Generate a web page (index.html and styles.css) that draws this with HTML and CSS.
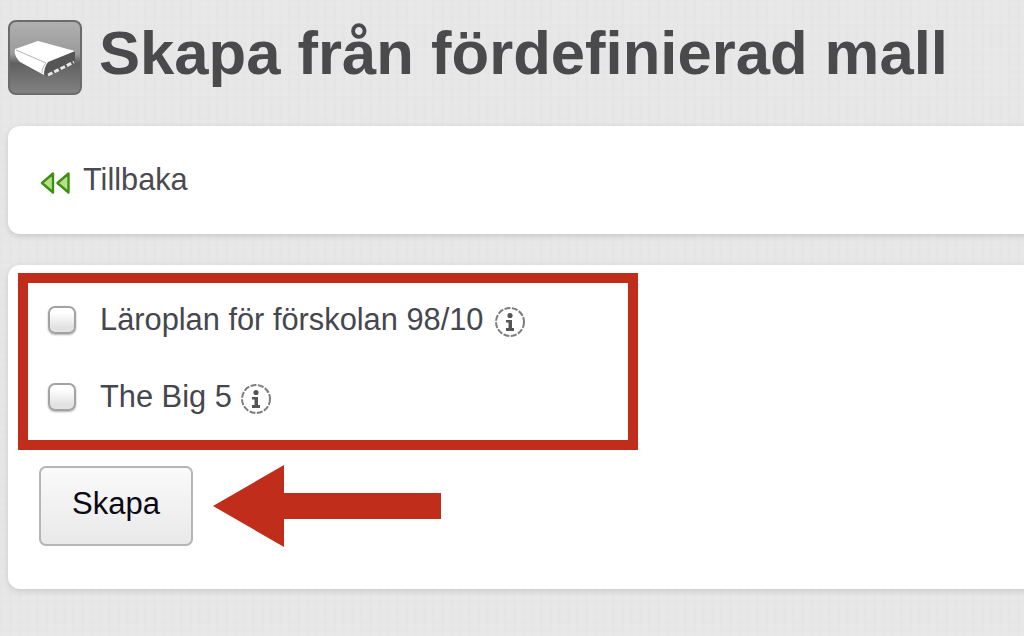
FILE: index.html
```html
<!DOCTYPE html>
<html lang="sv">
<head>
<meta charset="utf-8">
<title>Skapa från fördefinierad mall</title>
<link rel="stylesheet" href="styles.css">
</head>
<body>
<div class="page">
  <header class="head">
    <div class="book">
      <svg viewBox="0 0 74 75" width="74" height="75">
        <path d="M40 42 L67 31 L67 43 L39 56 L36 54 C36 50 37 46 40 42 Z" fill="#555"/>
        <path d="M7 29 L30 21 L67 31 L40 42 C37 46 36 50 36 55 L12 42 C8 38 6 33 7 29 Z" fill="#fff"/>
        <path d="M8 30 L38 43 C35 46 34 50 34 53" stroke="#b5b5b5" stroke-width="1" fill="none"/>
        <path d="M40 55 L66 42" stroke="#e8e8e8" stroke-width="3" stroke-dasharray="5 2" fill="none"/>
      </svg>
    </div>
    <h1 class="title">Skapa från fördefinierad mall</h1>
  </header>
  <section class="card back">
    <svg class="rew" viewBox="0 0 30 22" width="30" height="22">
      <path d="M2 11 L13 1.5 L13 20.5 Z M17.5 11 L28.5 1.5 L28.5 20.5 Z" fill="#b7e08a" stroke="#3f8f12" stroke-width="2.4" stroke-linejoin="round"/>
    </svg>
    <span>Tillbaka</span>
  </section>
  <section class="card form">
    <div class="row">
      <span class="check"></span>
      <span class="label">Läroplan för förskolan 98/10</span>
      <svg class="info" viewBox="0 0 32 32" width="32" height="32">
        <circle cx="16" cy="16" r="14" fill="#fff" stroke="#7c7c7c" stroke-width="2" stroke-dasharray="6 1.5"/>
        <circle cx="16" cy="9.5" r="2.6" fill="#555"/>
        <path d="M12 14 H18 V22 H20 V25 H12 V22 H14.5 V16.5 H12 Z" fill="#555"/>
      </svg>
    </div>
    <div class="row">
      <span class="check"></span>
      <span class="label">The Big 5</span>
      <svg class="info near" viewBox="0 0 32 32" width="32" height="32">
        <circle cx="16" cy="16" r="14" fill="#fff" stroke="#7c7c7c" stroke-width="2" stroke-dasharray="6 1.5"/>
        <circle cx="16" cy="9.5" r="2.6" fill="#555"/>
        <path d="M12 14 H18 V22 H20 V25 H12 V22 H14.5 V16.5 H12 Z" fill="#555"/>
      </svg>
    </div>
    <button class="btn" type="button">Skapa</button>
    <div class="mark"></div>
    <svg class="arrow" viewBox="0 0 230 84" width="230" height="84">
      <path d="M0 41 L71 0 L71 28 L228 28 L228 54 L71 54 L71 82 Z" fill="#c12d1b"/>
    </svg>
  </section>
</div>
</body>
</html>
```
FILE: styles.css
```css
html, body {
  margin: 0;
  height: 100%;
}
body {
  overflow: hidden;
  background-color: #e7e7e7;
  background-image:
    repeating-linear-gradient(0deg, rgba(255,255,255,.04) 0 3px, transparent 3px 9px),
    repeating-linear-gradient(90deg, rgba(0,0,0,.006) 0 3px, transparent 3px 9px);
  font-family: "Liberation Sans", Arial, sans-serif;
}
.page {
  padding: 20px 0 0 8px;
}
.head {
  display: flex;
  align-items: flex-start;
  gap: 17px;
  height: 75px;
  margin-bottom: 31px;
}
.book {
  width: 74px;
  height: 75px;
  box-sizing: border-box;
  border-radius: 8px;
  border: 2px solid #6b6b6b;
  background: linear-gradient(#b0b0b0 0%, #9a9a9a 45%, #606060 58%, #828282 100%);
  flex: none;
}
.book svg {
  display: block;
  margin: -2px;
}
.title {
  margin: 0;
  font-size: 61.6px;
  line-height: 66px;
  font-weight: 700;
  color: #4a4a4c;
  white-space: nowrap;
}
.card {
  background: #fff;
  border-radius: 12px;
  margin-right: -40px;
  box-shadow: 0 2px 6px rgba(0,0,0,.13);
}
.back {
  height: 108px;
  display: flex;
  align-items: center;
  gap: 13px;
  padding-left: 32px;
  margin-bottom: 31px;
  font-size: 30.7px;
  color: #4a4a50;
}
.rew {
  margin-top: 6px;
  flex: none;
}
.form {
  position: relative;
  height: 324px;
  box-sizing: border-box;
  padding: 40px 0 0 31px;
}
.row {
  display: flex;
  align-items: center;
  height: 30px;
  margin-bottom: 47px;
}
.check {
  width: 28px;
  height: 28px;
  box-sizing: border-box;
  margin: 0 24px 0 9px;
  border: 2px solid #a3a3a3;
  border-radius: 7px;
  background: linear-gradient(#fff 20%, #e2e2e2 80%);
  box-shadow: 0 1px 2px rgba(0,0,0,.3);
  flex: none;
}
.label {
  font-size: 30.8px;
  color: #46464e;
  white-space: nowrap;
}
.info {
  margin: 4px 0 0 10px;
  flex: none;
}
.info.near {
  margin-left: 8px;
}
.btn {
  display: block;
  width: 154px;
  height: 80px;
  margin-top: 54px;
  border: 2px solid #b5b5b5;
  border-radius: 7px;
  background: linear-gradient(#fafafa, #e9e9e9);
  font: 31px "Liberation Sans", Arial, sans-serif;
  color: #0a0a14;
  padding: 0 0 4px;
}
.mark {
  position: absolute;
  left: 10px;
  top: 8px;
  width: 620px;
  height: 177px;
  box-sizing: border-box;
  border: 10px solid #c12d1b;
}
.arrow {
  position: absolute;
  left: 205px;
  top: 200px;
}
```
